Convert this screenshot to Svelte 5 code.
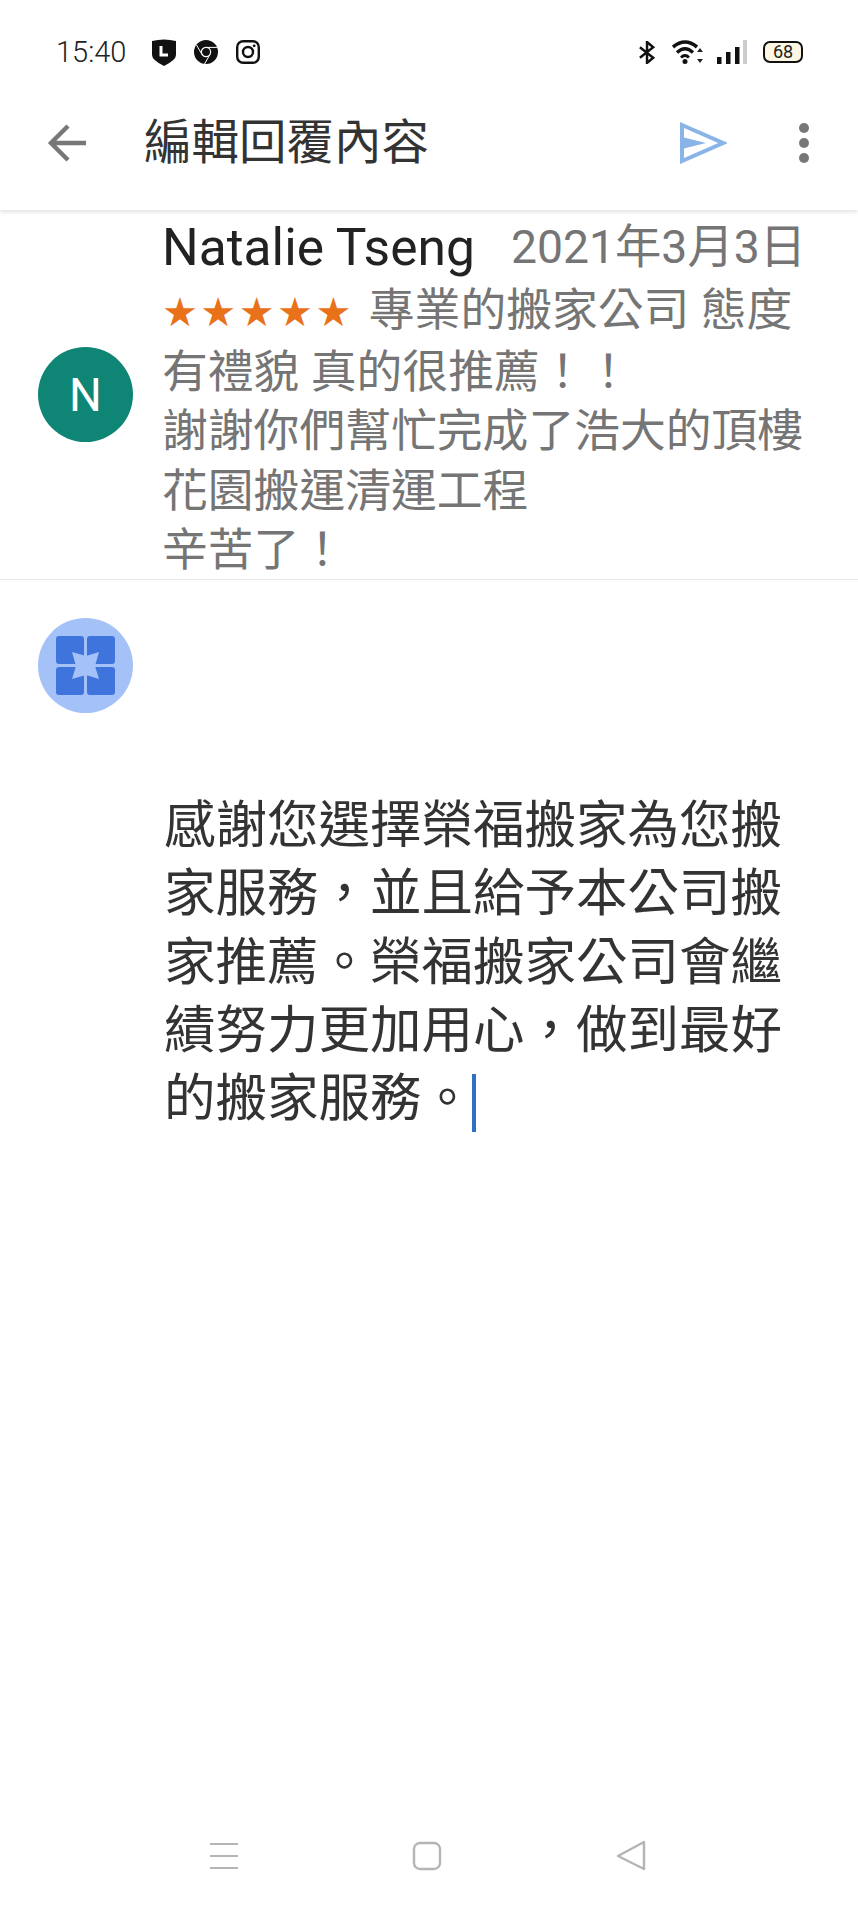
<script>
	const review = ['專業的搬家公司 態度', '有禮貌 真的很推薦！！', '謝謝你們幫忙完成了浩大的頂樓', '花園搬運清運工程', '辛苦了！'];
	const reply = ['感謝您選擇榮福搬家為您搬', '家服務，並且給予本公司搬', '家推薦。榮福搬家公司會繼', '績努力更加用心，做到最好'];
</script>

<div class="phone">
	<header class="appbar">
		<div class="status">
			<span class="time">15:40</span>
			<svg class="ic-line" viewBox="0 0 24 28" width="24" height="28">
				<path d="M0 3 Q12 0 24 3 V17 Q24 22 12 28 Q0 22 0 17Z" fill="#111" />
				<path d="M9 8 V17 H16" fill="none" stroke="#fff" stroke-width="3" />
			</svg>
			<svg class="ic-chrome" viewBox="0 0 24 24" width="24" height="24">
				<circle cx="12" cy="12" r="12" fill="#111" />
				<circle cx="12" cy="12" r="4.6" fill="none" stroke="#fff" stroke-width="1.2" />
				<path d="M12 7.4 H23 M8 14.5 L2.5 5 M16 14.5 L10.5 24" stroke="#fff" stroke-width="1" fill="none" />
			</svg>
			<svg class="ic-insta" viewBox="0 0 24 24" width="24" height="24">
				<rect x="1.2" y="1.2" width="21.6" height="21.6" rx="6" fill="none" stroke="#111" stroke-width="2.4" />
				<circle cx="12" cy="12" r="5" fill="none" stroke="#111" stroke-width="2.4" />
				<circle cx="18.2" cy="5.8" r="1.4" fill="#111" />
			</svg>
			<span class="spacer"></span>
			<svg class="ic-bt" viewBox="0 0 20 24" width="19" height="23">
				<path d="M2 6.5 L16 17.5 L9.5 23 V1 L16 6.5 L2 17.5" fill="none" stroke="#111" stroke-width="2.6" />
			</svg>
			<svg class="ic-wifi" viewBox="0 0 32 24" width="32" height="24">
				<path d="M1 7 Q13 -3 25 7" fill="none" stroke="#111" stroke-width="3.6" />
				<path d="M5 12.5 Q13 5 21 12.5" fill="none" stroke="#111" stroke-width="3.2" />
				<path d="M9 17.5 Q13 13.5 17 17.5" fill="none" stroke="#111" stroke-width="2.8" />
				<circle cx="13" cy="21.5" r="2.5" fill="#111" />
				<path d="M28 8 L31 12 H25Z M28 23 L31 19 H25Z" fill="#222" />
			</svg>
			<svg class="ic-signal" viewBox="0 0 32 24" width="32" height="24">
				<rect x="1" y="17" width="4.5" height="7" fill="#111" />
				<rect x="10" y="12" width="4.5" height="12" fill="#111" />
				<rect x="19" y="7" width="4.5" height="17" fill="#111" />
				<rect x="27" y="0" width="4" height="24" fill="#ccc" />
			</svg>
			<span class="battery">68</span>
		</div>
		<div class="toolbar">
			<svg class="back" viewBox="0 0 40 38" width="40" height="38">
				<path d="M39 19 H4 M21 2 L4 19 L21 36" fill="none" stroke="#777" stroke-width="4.4" />
			</svg>
			<h1>編輯回覆內容</h1>
			<span class="spacer"></span>
			<svg class="send" viewBox="0 0 47 42" width="47" height="42">
				<path d="M2 3 L43 21 L2 39Z" fill="none" stroke="#8ab4e8" stroke-width="4" />
				<path d="M2 15 L26 21 L2 27Z" fill="#8ab4e8" />
			</svg>
			<div class="more"><i></i><i></i><i></i></div>
		</div>
	</header>

	<section class="review">
		<div class="avatar teal">N</div>
		<div class="review-body">
			<div class="review-head">
				<span class="name">Natalie Tseng</span>
				<span class="date">2021年3月3日</span>
			</div>
			{#each review as line, i}
				<div class="line">
					{#if i === 0}<span class="stars">★★★★★</span>{/if}{line}
				</div>
			{/each}
		</div>
	</section>

	<section class="compose">
		<div class="avatar blue">
			<svg viewBox="0 0 59 59" width="59" height="59">
				<rect x="0" y="0" width="28" height="28" rx="3" fill="#3f74dc" />
				<rect x="31" y="0" width="28" height="28" rx="3" fill="#3f74dc" />
				<rect x="0" y="31" width="28" height="28" rx="3" fill="#3f74dc" />
				<rect x="31" y="31" width="28" height="28" rx="3" fill="#3f74dc" />
				<path d="M16 16 L30 20 L43 16 L39 30 L43 43 L30 39 L16 43 L20 30Z" fill="#a4c2f8" />
			</svg>
		</div>
		<div class="reply">
			{#each reply as line}
				<div>{line}</div>
			{/each}
			<div>的搬家服務。<span class="caret"></span></div>
		</div>
	</section>

	<nav class="sysnav">
		<svg viewBox="0 0 30 28" width="30" height="28">
			<path d="M1 2 H29 M1 14 H29 M1 26 H29" stroke="#b5b5b5" stroke-width="2.2" />
		</svg>
		<svg viewBox="0 0 30 30" width="30" height="30">
			<rect x="2" y="2" width="26" height="26" rx="6" fill="none" stroke="#b5b5b5" stroke-width="2.4" />
		</svg>
		<svg viewBox="0 0 32 32" width="32" height="32">
			<path d="M29 2 V29 L3 16Z" fill="none" stroke="#b5b5b5" stroke-width="2.4" stroke-linejoin="round" />
		</svg>
	</nav>
</div>

<style>
	:global(body) {
		margin: 0;
		background: #fff;
	}

	.phone {
		width: 858px;
		height: 1907px;
		display: flex;
		flex-direction: column;
		font-family: Roboto, 'Noto Sans CJK TC', sans-serif;
		overflow: hidden;
	}

	.appbar {
		height: 210px;
		box-sizing: border-box;
		background: #fff;
		box-shadow: 0 2px 4px rgba(0, 0, 0, 0.12);
		position: relative;
		flex: none;
	}

	.status {
		height: 104px;
		padding: 0 55px 0 56px;
		display: flex;
		align-items: center;
	}

	.time {
		font-size: 29px;
		font-weight: 300;
		color: #222;
		width: 96px;
	}

	.ic-chrome {
		margin-left: 18px;
	}

	.ic-insta {
		margin-left: 18px;
	}

	.spacer {
		flex: 1;
	}

	.ic-bt {
		margin-right: 15px;
	}

	.ic-wifi {
		margin-right: 12px;
	}

	.ic-signal {
		margin-right: 15px;
	}

	.battery {
		width: 40px;
		height: 22px;
		box-sizing: border-box;
		border: 2.5px solid #111;
		border-radius: 7px;
		background: #fdf6e3;
		font-size: 18px;
		line-height: 17px;
		text-align: center;
		color: #222;
	}

	.toolbar {
		height: 78px;
		padding: 0 0 0 47px;
		display: flex;
		align-items: center;
	}

	h1 {
		margin: 0 0 0 57px;
		font-size: 47.5px;
		font-weight: 400;
		line-height: 60px;
		color: #333;
	}

	.send {
		margin-right: 72px;
	}

	.more {
		display: flex;
		flex-direction: column;
		gap: 5px;
		margin-right: 49px;
	}

	.more i {
		width: 10px;
		height: 10px;
		border-radius: 50%;
		background: #777;
	}

	.review {
		height: 370px;
		box-sizing: border-box;
		border-bottom: 1px solid #e8e8e8;
		padding-left: 38px;
		display: flex;
		align-items: center;
		flex: none;
	}

	.avatar {
		width: 95px;
		height: 95px;
		border-radius: 50%;
		display: flex;
		align-items: center;
		justify-content: center;
		flex: none;
	}

	.teal {
		background: #0f8576;
		color: #fff;
		font-size: 46px;
	}

	.blue {
		background: #a4c2f8;
	}

	.review-body {
		align-self: flex-start;
		margin: 5px 0 0 29px;
		font-weight: 400;
		font-size: 45.8px;
		line-height: 59.6px;
		color: #757575;
		white-space: nowrap;
	}

	.review-head {
		width: 644px;
		height: 66px;
		display: flex;
		justify-content: space-between;
		align-items: center;
	}

	.name {
		font-size: 51.5px;
		font-weight: 400;
		color: #222;
	}

	.date {
		font-size: 46.3px;
		font-weight: 400;
		color: #757575;
	}

	.stars {
		color: #e8711a;
		font-family: 'DejaVu Sans', sans-serif;
		font-size: 40px;
		letter-spacing: 2.5px;
		margin-right: 15px;
	}

	.compose {
		padding: 38px 0 0 38px;
		display: flex;
		flex-direction: column;
	}

	.reply {
		margin: 79px 0 0 126px;
		font-size: 51.5px;
		font-weight: 400;
		line-height: 68.3px;
		color: #333;
		white-space: nowrap;
	}

	.caret {
		display: inline-block;
		width: 4px;
		height: 58px;
		background: #2f6fc4;
		vertical-align: middle;
		margin-left: -1px;
	}

	.sysnav {
		position: absolute;
		top: 1840px;
		left: 0;
		width: 858px;
		box-sizing: border-box;
		padding-left: 209px;
		display: flex;
		gap: 173px;
		align-items: center;
	}
</style>
